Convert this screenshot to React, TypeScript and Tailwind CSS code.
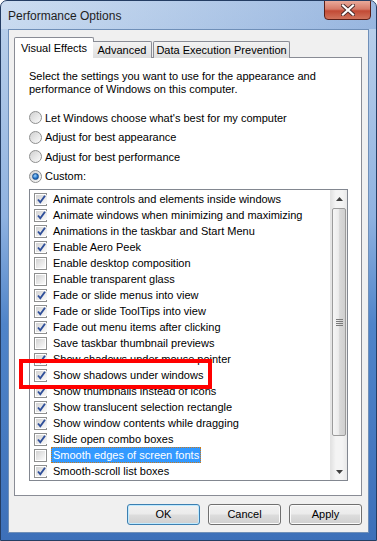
const font = "font-['Liberation_Sans',Arial,sans-serif]";

const effects: { label: string; on: boolean }[] = [
  { label: "Animate controls and elements inside windows", on: true },
  { label: "Animate windows when minimizing and maximizing", on: true },
  { label: "Animations in the taskbar and Start Menu", on: true },
  { label: "Enable Aero Peek", on: true },
  { label: "Enable desktop composition", on: false },
  { label: "Enable transparent glass", on: false },
  { label: "Fade or slide menus into view", on: true },
  { label: "Fade or slide ToolTips into view", on: true },
  { label: "Fade out menu items after clicking", on: true },
  { label: "Save taskbar thumbnail previews", on: false },
  { label: "Show shadows under mouse pointer", on: true },
  { label: "Show shadows under windows", on: true },
  { label: "Show thumbnails instead of icons", on: true },
  { label: "Show translucent selection rectangle", on: true },
  { label: "Show window contents while dragging", on: true },
  { label: "Slide open combo boxes", on: true },
  { label: "Smooth edges of screen fonts", on: false },
  { label: "Smooth-scroll list boxes", on: true },
];

const radios = [
  "Let Windows choose what's best for my computer",
  "Adjust for best appearance",
  "Adjust for best performance",
  "Custom:",
];

const Check = ({ on }: { on: boolean }) => (
  <span className="flex w-[13px] h-[13px] shrink-0 border border-[#8e8f8f] bg-white p-px">
    <span className="flex flex-1 items-center justify-center bg-gradient-to-br from-[#d3d3d3] to-[#fbfbfb]">
      {on && (
        <svg width="11" height="11" viewBox="0 0 11 11">
          <polyline points="2,5.5 4.3,8.3 9,1.8" fill="none" stroke="#2f4f9a" strokeWidth="1.9" />
        </svg>
      )}
    </span>
  </span>
);

const Radio = ({ on }: { on: boolean }) => (
  <span className="flex w-[13px] h-[13px] shrink-0 items-center justify-center rounded-full border border-[#8e8f8f] bg-gradient-to-br from-[#d0d0d0] to-[#fcfcfc]">
    {on && (
      <span className="w-[7px] h-[7px] rounded-full bg-[radial-gradient(circle_at_40%_35%,#9fd4ff,#1f6fc4_60%,#174f95)] border border-[#19508f]" />
    )}
  </span>
);

const Button = ({ label, primary }: { label: string; primary?: boolean }) => (
  <div
    className={
      "w-[73px] h-[21px] rounded-[3px] border flex items-center justify-center text-[11px] text-black " +
      (primary
        ? "border-[#3c7fb1] shadow-[inset_0_0_0_1px_#bfeaff]"
        : "border-[#707070] shadow-[inset_0_0_0_1px_#fbfbfb]") +
      " bg-[linear-gradient(to_bottom,#f2f2f2_0%,#ebebeb_48%,#dddddd_52%,#cfcfcf_100%)]"
    }
  >
    {label}
  </div>
);

const App = () => {
  return (
    <div
      className={`${font} w-[377px] h-[541px] rounded-t-[7px] border border-[#243d63] bg-[linear-gradient(to_bottom,#bcd2ec_0%,#a9c4e6_18%,#8fb2e0_40%,#4f84c9_60%,#3d70b9_100%)] flex flex-col overflow-hidden`}
    >
      {/* title bar */}
      <div className="h-[28px] flex items-start justify-between bg-[linear-gradient(to_right,rgba(255,255,255,0.25),rgba(60,110,190,0.25))]">
        <span className="pl-[7px] pt-[6px] text-[12px] text-[#1e1e1e]">Performance Options</span>
        <div className="mr-[5px] -mt-px w-[47px] h-[20px] rounded-b-[4px] border border-[#5a1f18] bg-[linear-gradient(to_bottom,#e9a99a_0%,#d57a68_45%,#c24a35_55%,#d0735c_100%)] flex items-center justify-center">
          <svg width="14" height="12" viewBox="0 0 14 12">
            <path d="M2 1.5 L12 10.5 M12 1.5 L2 10.5" stroke="#4a2a2a" strokeWidth="4" strokeLinecap="square" />
            <path d="M2 1.5 L12 10.5 M12 1.5 L2 10.5" stroke="#ffffff" strokeWidth="2.2" strokeLinecap="square" />
          </svg>
        </div>
      </div>

      {/* client area */}
      <div className="mx-[7px] h-[504px] border border-[#6f8fb8] bg-[#f0f0f0] pl-[5px] pt-[7px] flex flex-col">
        {/* tabs */}
        <div className="flex items-end h-[21px] text-[11px] text-black relative z-10">
          <div className="w-[80px] h-[21px] border border-b-0 border-[#898c95] bg-white flex items-start justify-center pt-[2px] rounded-t-[2px]">
            Visual Effects
          </div>
          <div className="w-[59px] h-[17px] -ml-px border border-b-0 border-l-0 border-[#898c95] bg-[linear-gradient(to_bottom,#f3f3f3,#dedede)] flex items-center justify-center rounded-tr-[2px]">
            Advanced
          </div>
          <div className="w-[137px] h-[17px] ml-px border border-b-0 border-[#898c95] bg-[linear-gradient(to_bottom,#f3f3f3,#dedede)] flex items-center justify-center rounded-t-[2px]">
            Data Execution Prevention
          </div>
        </div>

        {/* panel */}
        <div className="relative -mt-px w-[348px] h-[439px] border border-[#898c95] bg-white pl-[14px] pt-[12px] text-[11px] text-black">
          <p className="leading-[13px] w-[300px]">
            Select the settings you want to use for the appearance and performance of Windows on this computer.
          </p>

          <div className="mt-[12px] flex flex-col">
            {radios.map((r, i) => (
              <div key={r} className="h-[19.5px] flex items-center gap-[3px]">
                <Radio on={i === 3} />
                <span>{r}</span>
              </div>
            ))}
          </div>

          {/* list box */}
          <div className="mt-[3px] w-[319px] h-[292px] border border-[#828790] bg-white flex">
            <div className="flex-1 pt-px flex flex-col">
              {effects.map((e) => {
                const sel = e.label === "Smooth edges of screen fonts";
                return (
                  <div key={e.label} className="h-[16px] flex items-center pl-[4px] whitespace-nowrap">
                    <Check on={e.on} />
                    <span
                      className={
                        "ml-[4px] h-[16px] leading-[14px] px-px " +
                        (sel ? "bg-[#3399ff] text-white border border-dotted border-[#c97a1c]" : "border border-transparent")
                      }
                    >
                      {e.label}
                    </span>
                  </div>
                );
              })}
            </div>
            {/* scrollbar */}
            <div className="w-[17px] bg-[linear-gradient(to_right,#e3e3e3,#f4f4f4_30%,#f4f4f4_70%,#e8e8e8)] border-l border-[#e3e3e3] flex flex-col items-center">
              <div className="h-[17px] flex items-center justify-center">
                <svg width="7" height="4" viewBox="0 0 7 4">
                  <path d="M0 4 L3.5 0 L7 4 Z" fill="#404040" />
                </svg>
              </div>
              <div className="mt-px w-[14px] h-[228px] rounded-[2px] border border-[#9b9b9b] bg-[linear-gradient(to_right,#f5f5f5,#ececec_45%,#d9d9d9_55%,#cfcfcf)] flex items-center justify-center">
                <svg width="7" height="8" viewBox="0 0 7 8">
                  <path d="M0 1.5 H7 M0 3.5 H7 M0 5.5 H7 M0 7.5 H7" stroke="#7a7a7a" strokeWidth="1" />
                </svg>
              </div>
              <div className="flex-1" />
              <div className="h-[17px] flex items-center justify-center">
                <svg width="7" height="4" viewBox="0 0 7 4">
                  <path d="M0 0 L3.5 4 L7 0 Z" fill="#404040" />
                </svg>
              </div>
            </div>
          </div>

          {/* red annotation */}
          <div className="absolute left-[4px] top-[301px] w-[193px] h-[30px] border-4 border-[#ff0000]" />
        </div>

        {/* buttons */}
        <div className="mt-[8px] flex justify-end gap-[8px] pr-[6px]">
          <Button label="OK" primary />
          <Button label="Cancel" />
          <Button label="Apply" />
        </div>
      </div>
    </div>
  );
};

export default App;
